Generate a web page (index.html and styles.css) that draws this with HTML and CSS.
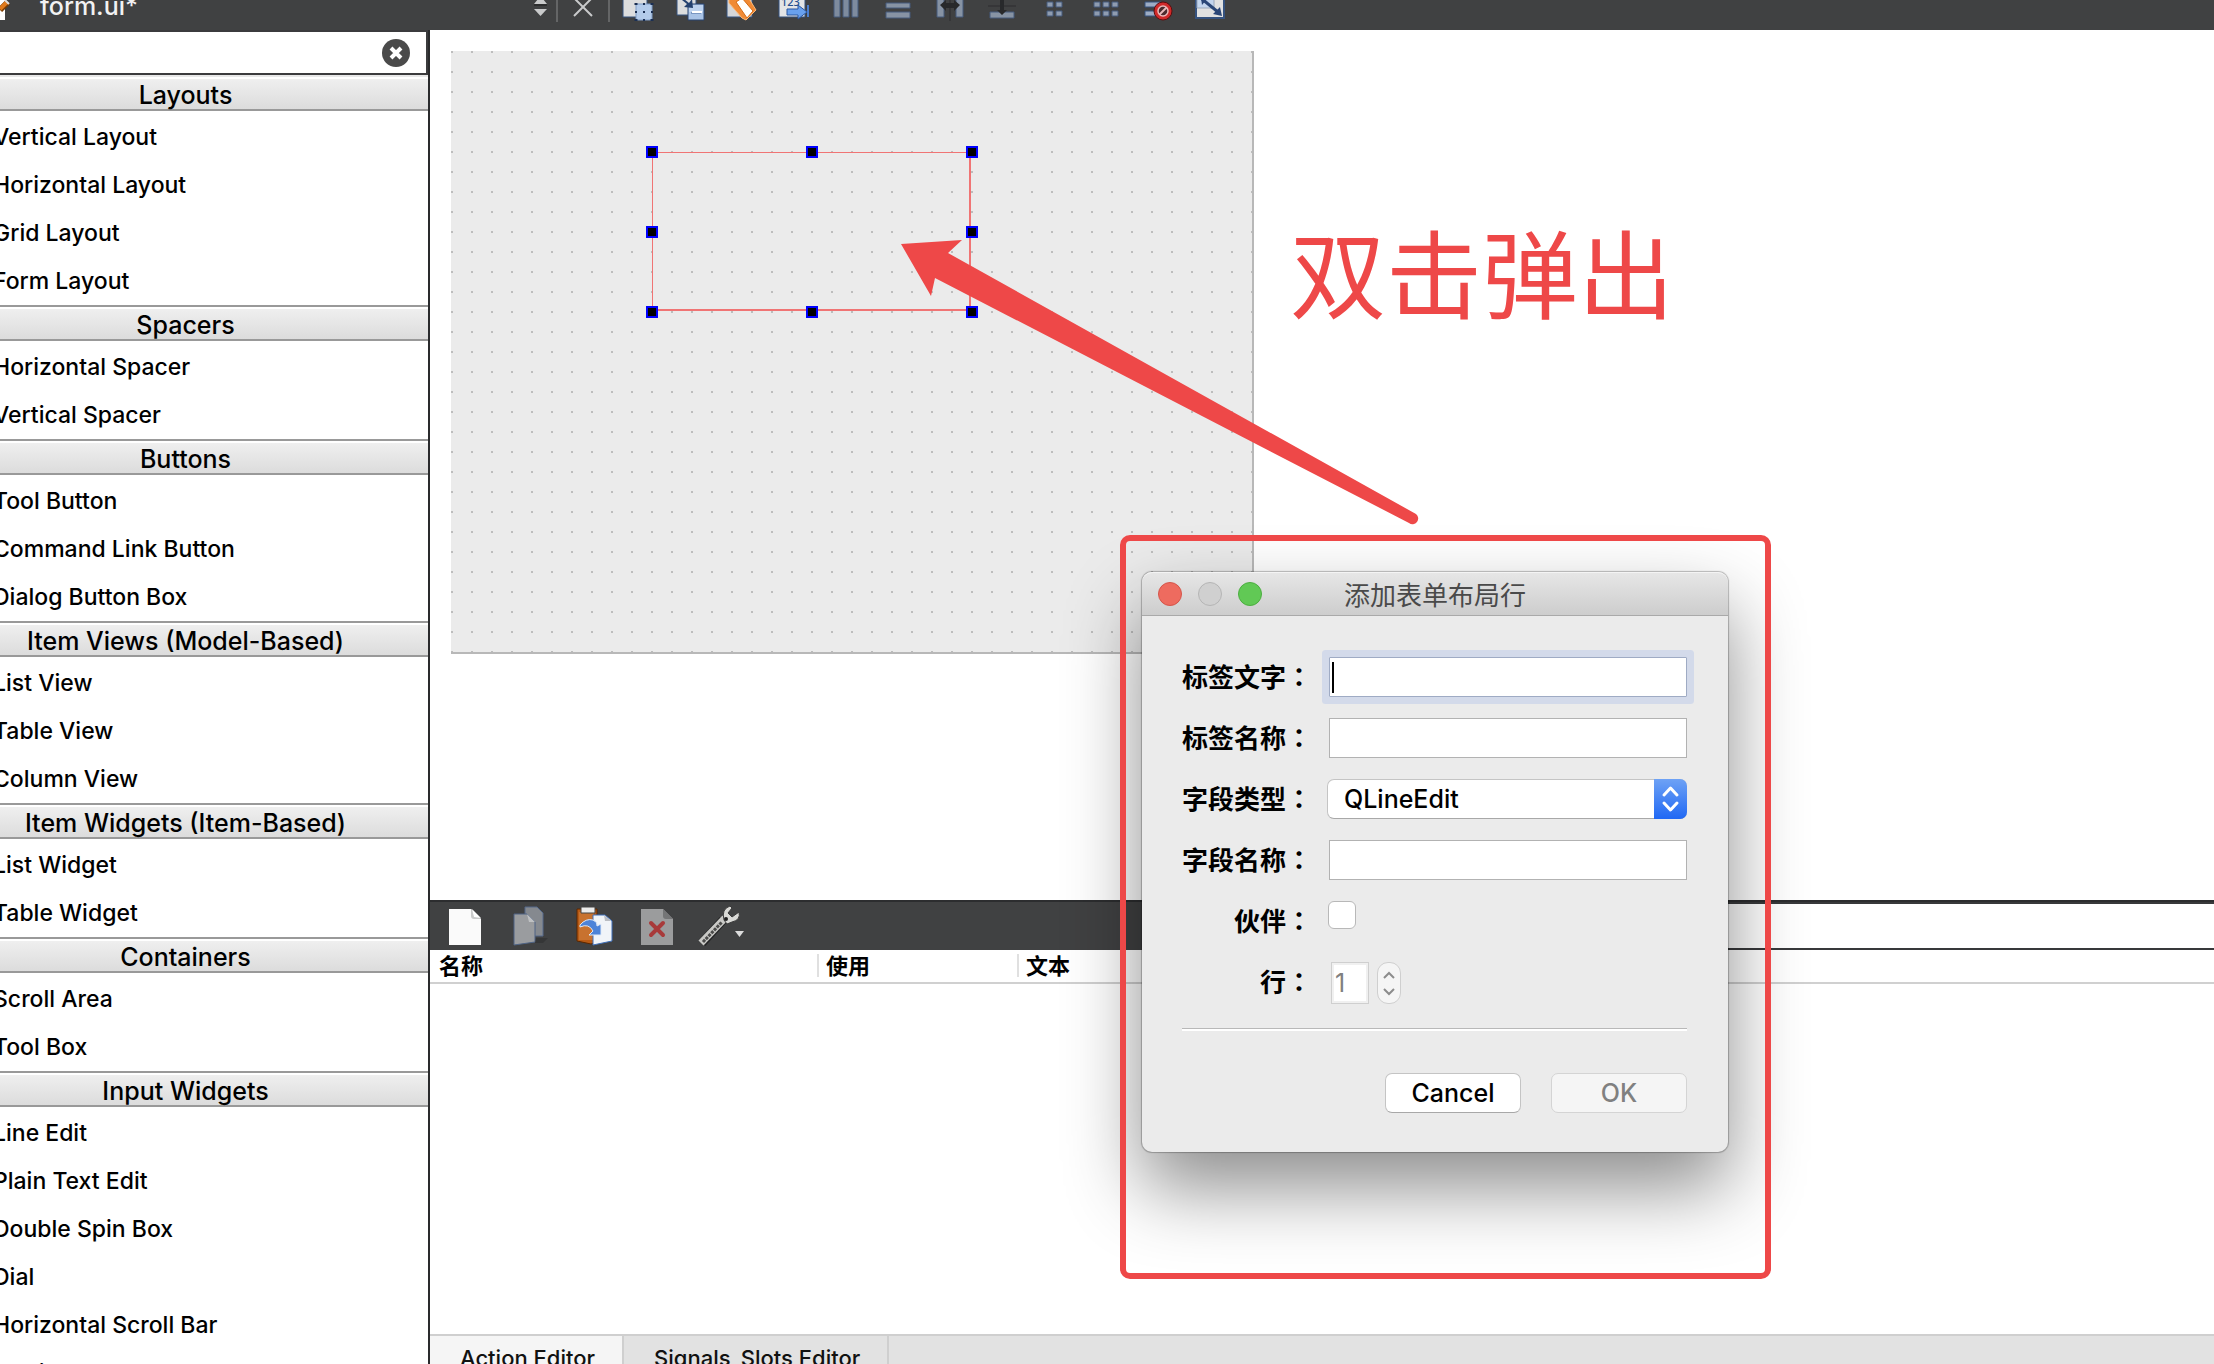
FILE: index.html
```html
<!DOCTYPE html>
<html lang="zh-CN">
<head>
<meta charset="utf-8">
<title>form.ui*</title>
<link rel="stylesheet" href="styles.css">
</head>
<body>
<div class="app">
  <header class="topbar">
    <div class="file">
      <svg class="file-icon" width="20" height="30" viewBox="0 0 20 30"><path d="M0 0H5V20H0Z" fill="#fff"/><path d="M0 10 8 2" stroke="#7a3c00" stroke-width="6"/><path d="M0 9 7 2" stroke="#e07a1c" stroke-width="4"/><path d="M5 0 9 4" stroke="#ddd" stroke-width="2"/></svg>
      <span class="file-name">form.ui*</span>
    </div>
    <button class="tool tool-split" aria-label="Switch file"><svg width="24" height="30" viewBox="0 0 24 30"><path d="M4 4 10.500-4 17 4Z" fill="#c9cacb"/><path d="M4 5H17" stroke="#2c2d2e" stroke-width="2"/><path d="M4 9H17L10.500 16Z" fill="#c9cacb"/></svg></button>
    <span class="divider"></span>
    <button class="tool tool-close" aria-label="Close file"><svg width="50" height="30" viewBox="0 0 50 30"><path d="M16-2 34 16M34-2 16 16" stroke="#c9cacb" stroke-width="2" fill="none"/></svg></button>
    <span class="divider"></span>
    <nav class="tools">
      <button class="tool" aria-label="Edit widgets"><svg width="52" height="30" viewBox="0 0 52 30"><path d="M11-4H35V17H11Z" fill="#dcddde" stroke="#35527f"/><path d="M24 4H40V20H24Z" fill="#b3cbea" stroke="#7f9cc6"/><g fill="#1b2f52"><path d="M22.500 3h3v2h-3zM31 3h2v2h-2zM38.500 3h3v2h-3zM23 11h2v2h-2zM39 11h2v2h-2zM22.500 19h3v2h-3zM31 19h2v2h-2zM38.500 19h3v2h-3zM31 11h2v2h-2z"/></g></svg></button>
      <button class="tool" aria-label="Edit signals"><svg width="52" height="30" viewBox="0 0 52 30"><path d="M13-4H32V15H13Z" fill="#dcddde" stroke="#35527f"/><path d="M24 4H40V20H24Z" fill="#a9c3e6" stroke="#27436f"/><path d="M25 5H39V12H25Z" fill="#bdd2ee"/><path d="M27 13H37" stroke="#4d6d9d"/><path d="M28 12H38" stroke="#fff" stroke-width="2"/><path d="M20-1 25 3 28-1 29 8 20 7 23 4 18 0Z" fill="#24416f"/></svg></button>
      <button class="tool" aria-label="Edit buddies"><svg width="52" height="30" viewBox="0 0 52 30"><path d="M11-4H36V17H11Z" fill="#d5d6d8" stroke="#35527f"/><path d="M13-1 20-6 32-3 40 10 30 20 26 18 13 3Z" fill="#f08a35" stroke="#fbb878"/><path d="M20 2 26-2 37 11 31 18Z" fill="#fff" stroke="#d46b14"/></svg></button>
      <button class="tool" aria-label="Edit tab order"><svg width="52" height="30" viewBox="0 0 52 30"><path d="M11-6H37V17H11Z" fill="#e4e5e6" stroke="#35527f"/><text x="13" y="6" class="glyph-num">123</text><path d="M19 9H30V5L39 12 30 19V15H19Z" fill="#69a1ee" stroke="#2b569f"/><path d="M40 5V17" stroke="#4b7fcf" stroke-width="2"/></svg></button>
      <button class="tool" aria-label="Lay out horizontally"><svg width="52" height="30" viewBox="0 0 52 30"><path d="M14-4h6v21h-6zM23-4h6v21h-6zM32-4h6v21h-6z" fill="#7e8b9e" stroke="#455a7d"/></svg></button>
      <button class="tool" aria-label="Lay out vertically"><svg width="52" height="30" viewBox="0 0 52 30"><path d="M14-6h24v5h-24zM14 3h24v5h-24zM14 12h24v6h-24z" fill="#8793a4" stroke="#455a7d"/></svg></button>
      <button class="tool" aria-label="Horizontal splitter"><svg width="52" height="30" viewBox="0 0 52 30"><path d="M13-4h7v21h-7zM32-4h7v21h-7z" fill="#8793a4" stroke="#455a7d"/><path d="M26-2V21" stroke="#2c2d2f"/><path d="M16 5 22 0V3H30V0L36 5 30 11V8H22V11Z" fill="#28292b"/></svg></button>
      <button class="tool" aria-label="Vertical splitter"><svg width="52" height="30" viewBox="0 0 52 30"><path d="M14 12h24v6h-24z" fill="#8793a4" stroke="#455a7d"/><path d="M12 6H40" stroke="#2c2d2f"/><path d="M24 0H21L26-5 31 0H28V10H31L26 15 21 10H24Z" fill="#28292b"/></svg></button>
      <button class="tool" aria-label="Lay out in a form"><svg width="52" height="30" viewBox="0 0 52 30"><path d="M19 2h6v5h-6zM28 2h6v5h-6zM19 11h6v5h-6zM28 11h6v5h-6z" fill="#8f9cb0" stroke="#455a7d"/></svg></button>
      <button class="tool" aria-label="Lay out in a grid"><svg width="52" height="30" viewBox="0 0 52 30"><path d="M14 2h6v5h-6zM23 2h6v5h-6zM32 2h6v5h-6zM14 11h6v5h-6zM23 11h6v5h-6zM32 11h6v5h-6z" fill="#8f9cb0" stroke="#455a7d"/></svg></button>
      <button class="tool" aria-label="Break layout"><svg width="52" height="30" viewBox="0 0 52 30"><path d="M13 2h16v5h-16zM13 11h16v5h-16z" fill="#9dacc4" stroke="#35527f"/><circle cx="31" cy="11" r="9" fill="#d02a2a" stroke="#5d0d0d"/><circle cx="31" cy="11" r="5" fill="#4b2b2d" stroke="#e8b9b9" stroke-width="1.500"/><path d="M27.500 14.500 34.500 7.500" stroke="#e8b9b9" stroke-width="2"/></svg></button>
      <button class="tool" aria-label="Adjust size"><svg width="52" height="30" viewBox="0 0 52 30"><path d="M12-6H40V18H12Z" fill="#e1e1e1" stroke="#35527f" stroke-width="2"/><path d="M13-4H30V8H13Z" fill="#c3d5ee" stroke="#9aa7ba"/><path d="M18-1 34 12" stroke="#2a4677" stroke-width="3"/><path d="M38 16 29 14 36 7ZM17-2H24L18 5Z" fill="#2a4677"/></svg></button>
    </nav>
  </header>

  <div class="workspace">
    <aside class="sidebar">
      <div class="filter">
        <input type="text" class="filter-input" aria-label="Filter">
        <button class="filter-clear" aria-label="Clear filter"><svg width="28" height="28" viewBox="0 0 28 28"><circle cx="14" cy="14" r="14" fill="#4a4a4a"/><path d="M9 9 19 19M19 9 9 19" stroke="#fff" stroke-width="4"/></svg></button>
      </div>
      <div class="palette">
        <h2 class="group">Layouts</h2>
        <ul class="items"><li>Vertical Layout</li><li>Horizontal Layout</li><li>Grid Layout</li><li>Form Layout</li></ul>
        <h2 class="group">Spacers</h2>
        <ul class="items"><li>Horizontal Spacer</li><li>Vertical Spacer</li></ul>
        <h2 class="group">Buttons</h2>
        <ul class="items"><li>Tool Button</li><li>Command Link Button</li><li>Dialog Button Box</li></ul>
        <h2 class="group">Item Views (Model-Based)</h2>
        <ul class="items"><li>List View</li><li>Table View</li><li>Column View</li></ul>
        <h2 class="group">Item Widgets (Item-Based)</h2>
        <ul class="items"><li>List Widget</li><li>Table Widget</li></ul>
        <h2 class="group">Containers</h2>
        <ul class="items"><li>Scroll Area</li><li>Tool Box</li></ul>
        <h2 class="group">Input Widgets</h2>
        <ul class="items"><li>Line Edit</li><li>Plain Text Edit</li><li>Double Spin Box</li><li>Dial</li><li>Horizontal Scroll Bar</li><li>Vertical Scroll Bar</li></ul>
      </div>
    </aside>

    <main class="editor">
      <section class="canvas">
        <div class="form">
          <div class="selection">
            <i class="handle n w"></i><i class="handle n c"></i><i class="handle n e"></i>
            <i class="handle m w"></i><i class="handle m e"></i>
            <i class="handle s w"></i><i class="handle s c"></i><i class="handle s e"></i>
          </div>
        </div>
      </section>

      <section class="dock">
        <div class="dock-bar">
          <div class="dock-tools">
            <button class="action" aria-label="New"><svg width="64" height="48" viewBox="0 0 64 48"><path d="M16 9H38L48 19V45H16Z" fill="#fafafa"/><path d="M38 9 48 19H41Q38 19 38 16Z" fill="#c9caca"/><path d="M39 9 48 18 41 17Z" fill="#fff"/></svg></button>
            <button class="action" aria-label="Copy"><svg width="64" height="48" viewBox="0 0 64 48"><path d="M28 7H40L46 13V36H28Z" fill="#85898f" stroke="#55698a"/><path d="M17 14H30L38 22V42L17 45Z" fill="#9a9c9f" stroke="#4e6384"/><path d="M30 14 38 22H32Z" fill="#bfc1c3"/><path d="M39 38H51L46 43H38Z" fill="#2e2f31" opacity=".6"/></svg></button>
            <button class="action" aria-label="Paste"><svg width="64" height="48" viewBox="0 0 64 48"><path d="M16 9H36V42L30 44 16 41Z" fill="#b85a14" stroke="#5a2700"/><path d="M18 12H33V40H18Z" fill="#c8722f"/><path d="M20 7H34V13H20Z" fill="#ececec" stroke="#444"/><path d="M32 15H44L51 21V41L32 45Z" fill="#f1f4f8" stroke="#3f6fb8"/><path d="M43 15 50 21H44Z" fill="#b9bcc2"/><path d="M19 25Q25 18 32 20Q37 22 36 26L40 24V35H28L32 31Q28 23 19 27Z" fill="#4d83d8" stroke="#dfe9f7"/></svg></button>
            <button class="action" aria-label="Delete"><svg width="64" height="48" viewBox="0 0 64 48"><path d="M16 9H38L48 19V45H16Z" fill="#9b9c9d"/><path d="M38 9 48 19H41Q38 19 38 16Z" fill="#747576"/><path d="M26 23 38 35M38 23 26 35" stroke="#a83a3a" stroke-width="4" stroke-linecap="round"/></svg></button>
            <button class="action" aria-label="Configure"><svg width="64" height="48" viewBox="0 0 64 48"><path d="M13 43 34 20" stroke="#232425" stroke-width="9"/><path d="M12 43 36 18" stroke="#c9c9c6" stroke-width="7"/><path d="M14 42 33 22" stroke="#4b4b4a" stroke-width="3" stroke-dasharray="3 1"/><path d="M35 20Q32 9 41 6L43 8 39 13 43 17 50 12Q52 20 43 22L38 24Z" fill="#d9d9d6" stroke="#3a3a3a"/><circle cx="37" cy="19" r="2" fill="#1f1f1f"/><path d="M46 31H55L50.500 37Z" fill="#dcdcdc"/></svg></button>
          </div>
          <input type="text" class="dock-filter" aria-label="Filter actions">
        </div>
        <table class="actions-table">
          <colgroup><col class="col-name"><col class="col-used"><col></colgroup>
          <thead><tr><th scope="col">名称</th><th scope="col">使用</th><th scope="col">文本</th></tr></thead>
          <tbody></tbody>
        </table>
        <div class="tabs">
          <button class="tab tab-active">Action Editor</button>
          <button class="tab">Signals_Slots Editor</button>
        </div>
      </section>
    </main>
  </div>

  <section class="dialog" role="dialog" aria-labelledby="dialog-title">
    <header class="titlebar">
      <div class="lights"><button class="light red" aria-label="Close"></button><button class="light off" aria-label="Minimize"></button><button class="light green" aria-label="Zoom"></button></div>
      <h1 class="title" id="dialog-title">添加表单布局行</h1>
    </header>
    <form class="dialog-body">
      <div class="fields">
        <label for="label-text">标签文字<span class="colon" lang="zh-TW">：</span></label>
        <div class="focus-wrap"><input id="label-text" class="field field-focus" type="text"><span class="caret"></span></div>
        <label for="label-name">标签名称<span class="colon" lang="zh-TW">：</span></label>
        <input id="label-name" class="field" type="text">
        <label for="field-type">字段类型<span class="colon" lang="zh-TW">：</span></label>
        <div class="select-wrap">
          <select id="field-type" class="select"><option>QLineEdit</option></select>
          <svg class="select-arrows" width="33" height="40" viewBox="0 0 33 40"><path d="M10 16 16.500 9 23 16M10 24 16.500 31 23 24" fill="none" stroke="#fff" stroke-width="3" stroke-linecap="round" stroke-linejoin="round"/></svg>
        </div>
        <label for="field-name">字段名称<span class="colon" lang="zh-TW">：</span></label>
        <input id="field-name" class="field" type="text">
        <label for="buddy">伙伴<span class="colon" lang="zh-TW">：</span></label>
        <input id="buddy" class="check" type="checkbox">
        <label for="row">行<span class="colon" lang="zh-TW">：</span></label>
        <div class="spin">
          <input id="row" class="spin-input" type="number" value="1" disabled>
          <div class="stepper">
            <button type="button" class="step" disabled aria-label="Increase"><svg width="12" height="8" viewBox="0 0 12 8"><path d="M1 7 6 2 11 7" fill="none" stroke="#8c8c8c" stroke-width="2"/></svg></button>
            <button type="button" class="step" disabled aria-label="Decrease"><svg width="12" height="8" viewBox="0 0 12 8"><path d="M1 1 6 6 11 1" fill="none" stroke="#8c8c8c" stroke-width="2"/></svg></button>
          </div>
        </div>
      </div>
      <div class="buttons">
        <button type="button" class="btn">Cancel</button>
        <button type="submit" class="btn" disabled>OK</button>
      </div>
    </form>
  </section>

  <div class="markup-box"></div>
  <svg class="markup-arrow" width="530" height="300" viewBox="0 0 530 300"><path d="M1 14 62 10 48 23 516 284A5 5 0 0 1 509 293L35 48 31 66Z" fill="#ee4848"/></svg>
  <p class="markup-text">双击弹出</p>
</div>
</body>
</html>
```
FILE: styles.css
```css
* { box-sizing: border-box; }

body {
  margin: 0;
  background: #fff;
  color: #000;
  font-family: Inter, "Noto Sans CJK SC", sans-serif;
  font-size: 24px;
}

button, input, select {
  font: inherit;
  margin: 0;
  padding: 0;
  border: 0;
  border-radius: 0;
  outline: 0;
}

svg { display: block; }

.app {
  position: relative;
  display: flex;
  flex-direction: column;
  height: 100vh;
  overflow: hidden;
}

/* top bar */
.topbar {
  flex: none;
  display: flex;
  height: 30px;
  overflow: hidden;
  background: #404142;
}

.file {
  display: flex;
  flex: none;
  gap: 20px;
  width: 530px;
  color: #f2f2f2;
}

.file-name {
  line-height: 12px;
  font-size: 25px;
  font-weight: 500;
}

.tool, .action {
  display: block;
  background: none;
}

.tool-split { width: 26px; }

.divider {
  width: 2px;
  height: 22px;
  background: #646566;
}

.tools {
  display: flex;
  padding-left: 2px;
}

.glyph-num {
  font: 500 11px "Noto Sans", sans-serif;
  fill: #24508f;
}

/* widget palette */
.workspace {
  flex: 1;
  display: flex;
  min-height: 0;
}

.sidebar {
  flex: none;
  width: 430px;
  overflow: hidden;
  border-right: 2px solid #2a2b2d;
}

.filter {
  display: flex;
  align-items: center;
  height: 45px;
  padding-right: 16px;
  border: solid #3b3b3d;
  border-width: 2px 2px 2px 0;
}

.filter-input {
  flex: 1;
  min-width: 0;
}

.filter-clear { background: none; }

/* the palette is scrolled sideways, its icon column is out of view */
.palette { margin-left: -57px; }

.group {
  height: 36px;
  margin: 0;
  border: solid #999;
  border-width: 2px 0;
  background: linear-gradient(#fff 2px, #efefef 2px, #dcdcdc);
  font-size: 25px;
  font-weight: 500;
  line-height: 36px;
  text-align: center;
}

.group:first-child { border-top-color: #e8e8e8; }

.items {
  margin: 0;
  padding: 2px 0 0 50px;
  list-style: none;
  font-size: 23px;
  font-weight: 500;
  line-height: 48px;
}

/* form canvas */
.editor {
  flex: 1;
  display: flex;
  flex-direction: column;
  min-width: 0;
}

.canvas {
  flex: 1;
  min-height: 0;
  padding: 21px;
}

.form {
  position: relative;
  width: 803px;
  height: 603px;
  border: solid #b8b8b8;
  border-width: 0 2px 2px 0;
  background: linear-gradient(90deg, transparent 2px, #ebebeb 2px) 0 0 / 20px 20px,
              linear-gradient(#bdbdbd 2px, #ebebeb 2px) 0 0 / 20px 20px;
}

.selection {
  position: absolute;
  left: 201px;
  top: 101px;
  width: 319px;
  height: 159px;
  border: solid #f07474;
  border-width: 1px 2px 2px 1px;
}

.handle {
  position: absolute;
  width: 12px;
  height: 12px;
  border: 2px solid #00f;
  background: #000;
}

.n { top: -7px; }
.m { top: 73px; }
.s { bottom: -9px; }
.w { left: -7px; }
.c { left: 153px; }
.e { right: -9px; }

/* action editor */
.dock {
  flex: none;
  display: flex;
  flex-direction: column;
  height: 464px;
}

.dock-bar {
  display: flex;
  height: 50px;
  border-top: 2px solid #2c2d2f;
  background: #404142;
}

.dock-tools {
  display: flex;
  align-items: flex-start;
  width: 870px;
  padding-left: 3px;
}

.action svg { margin-top: -2px; }

.dock-filter {
  flex: 1;
  border: solid #38393b;
  border-width: 2px 0;
  background: #fff;
}

.actions-table {
  width: 100%;
  table-layout: fixed;
  border-collapse: collapse;
}

.actions-table tr { border-bottom: 2px solid #d0d0d0; }

.col-name { width: 387px; }
.col-used { width: 200px; }

.actions-table th {
  height: 33px;
  padding: 0 0 0 9px;
  font-size: 22px;
  font-weight: 700;
  line-height: 30px;
  text-align: left;
}

.actions-table th + th { background: linear-gradient(#e0e0e0, #e0e0e0) 0 4px / 2px 23px no-repeat; }

.tabs {
  display: flex;
  height: 30px;
  margin-top: auto;
  overflow: hidden;
  border-top: 2px solid #cfcfcf;
  background: #e2e2e2;
}

.tab {
  height: 44px;
  padding: 0 27px 0 30px;
  border-right: 2px solid #cfcfcf;
  background: #e2e2e2;
  color: #111;
  font-size: 22px;
  font-weight: 500;
}

.tab-active { background: #f5f5f5; }

/* add-row dialog */
.dialog {
  position: absolute;
  left: 1142px;
  top: 572px;
  width: 586px;
  border-radius: 10px;
  background: #ebebeb;
  box-shadow: 0 0 1px 1px rgba(0, 0, 0, .25), 0 36px 76px rgba(0, 0, 0, .45);
}

.titlebar {
  display: grid;
  grid-template-columns: 1fr auto 1fr;
  align-items: center;
  height: 44px;
  padding: 0 16px;
  border-top: 1px solid #f4f4f4;
  border-bottom: 1px solid #a9a9a9;
  border-radius: 10px 10px 0 0;
  background: linear-gradient(#e6e6e6, #cdcdcd);
}

.lights {
  display: flex;
  gap: 16px;
}

.light {
  width: 24px;
  height: 24px;
  border: 1px solid;
  border-radius: 50%;
}

.red { background: #ee6b5f; border-color: #d5554a; }
.off { background: #d0d0d0; border-color: #b5b5b5; }
.green { background: #61c955; border-color: #4cae40; }

.title {
  margin: 0;
  color: #4a4a4a;
  font-family: "Noto Sans CJK SC", sans-serif;
  font-size: 26px;
  font-weight: 400;
  line-height: 40px;
}

.dialog-body { padding: 41px 41px 39px 40px; }

.fields {
  display: grid;
  grid-template-columns: 130px 1fr;
  grid-auto-rows: 40px;
  gap: 21px 17px;
  padding-bottom: 26px;
  border-bottom: 1px solid #b8b8b8;
  box-shadow: 0 2px #fff;
}

.fields label {
  font-family: "Noto Sans CJK SC", sans-serif;
  font-size: 26px;
  font-weight: 700;
  line-height: 38px;
  text-align: right;
  white-space: nowrap;
}

.colon { font-family: "Noto Sans CJK TC", sans-serif; }

.field {
  width: 100%;
  height: 40px;
  padding: 0 6px;
  border: 1px solid #b2b2b2;
  background: #fff;
}

.focus-wrap { position: relative; }

.field-focus {
  border-color: #9fabc4;
  border-radius: 1px;
  box-shadow: 0 0 0 7px #d3daea;
}

.caret {
  position: absolute;
  left: 3px;
  top: 5px;
  width: 2px;
  height: 31px;
  background: #000;
}

.select-wrap {
  position: relative;
  margin-left: -2px;
}

.select {
  width: 100%;
  height: 40px;
  padding: 0 40px 0 16px;
  border: 1px solid #c4c4c4;
  border-bottom-color: #a8a8a8;
  border-radius: 7px;
  appearance: none;
  background: #fff;
  color: #000;
  font-size: 25px;
  font-weight: 500;
}

.select-arrows {
  position: absolute;
  right: 0;
  top: 0;
  border-radius: 0 7px 7px 0;
  background: linear-gradient(#6ea2f5, #2068f4);
  pointer-events: none;
}

.check {
  width: 28px;
  height: 28px;
  margin-left: -1px;
  border: 1px solid #b8b8b8;
  border-radius: 6px;
  appearance: none;
  background: #fff;
}

.spin {
  display: flex;
  gap: 8px;
  padding-left: 2px;
}

.spin-input {
  width: 38px;
  height: 42px;
  padding-left: 3px;
  border: 1px solid #cfcfcf;
  outline: 2px solid #f0f0f0;
  outline-offset: -3px;
  background: #fff;
  color: #808080;
  font-size: 25px;
  appearance: textfield;
}

.spin-input::-webkit-inner-spin-button { appearance: none; }

.stepper {
  display: flex;
  flex-direction: column;
  width: 24px;
  height: 42px;
  padding: 3px 0;
  border: 1px solid #cfcfcf;
  border-radius: 11px;
  background: #f5f5f5;
}

.step {
  flex: 1;
  display: grid;
  place-items: center;
  background: none;
}

.buttons {
  display: flex;
  justify-content: flex-end;
  gap: 30px;
  padding-top: 44px;
}

.btn {
  width: 136px;
  height: 40px;
  border: 1px solid #c4c4c4;
  border-bottom-color: #a8a8a8;
  border-radius: 7px;
  background: #fff;
  color: #000;
  font-size: 25px;
  font-weight: 500;
}

.btn:disabled {
  border-color: #d4d4d4;
  background: #f5f5f5;
  color: #808080;
}

/* red annotations over the window */
.markup-box {
  position: absolute;
  left: 1120px;
  top: 535px;
  width: 651px;
  height: 744px;
  border: 6px solid #ee4848;
  border-radius: 10px;
  pointer-events: none;
}

.markup-arrow {
  position: absolute;
  left: 900px;
  top: 230px;
}

.markup-text {
  position: absolute;
  left: 1290px;
  top: 210px;
  margin: 0;
  color: #ee4848;
  font-family: "Noto Sans CJK SC", sans-serif;
  font-size: 96px;
  line-height: 120px;
}
```
